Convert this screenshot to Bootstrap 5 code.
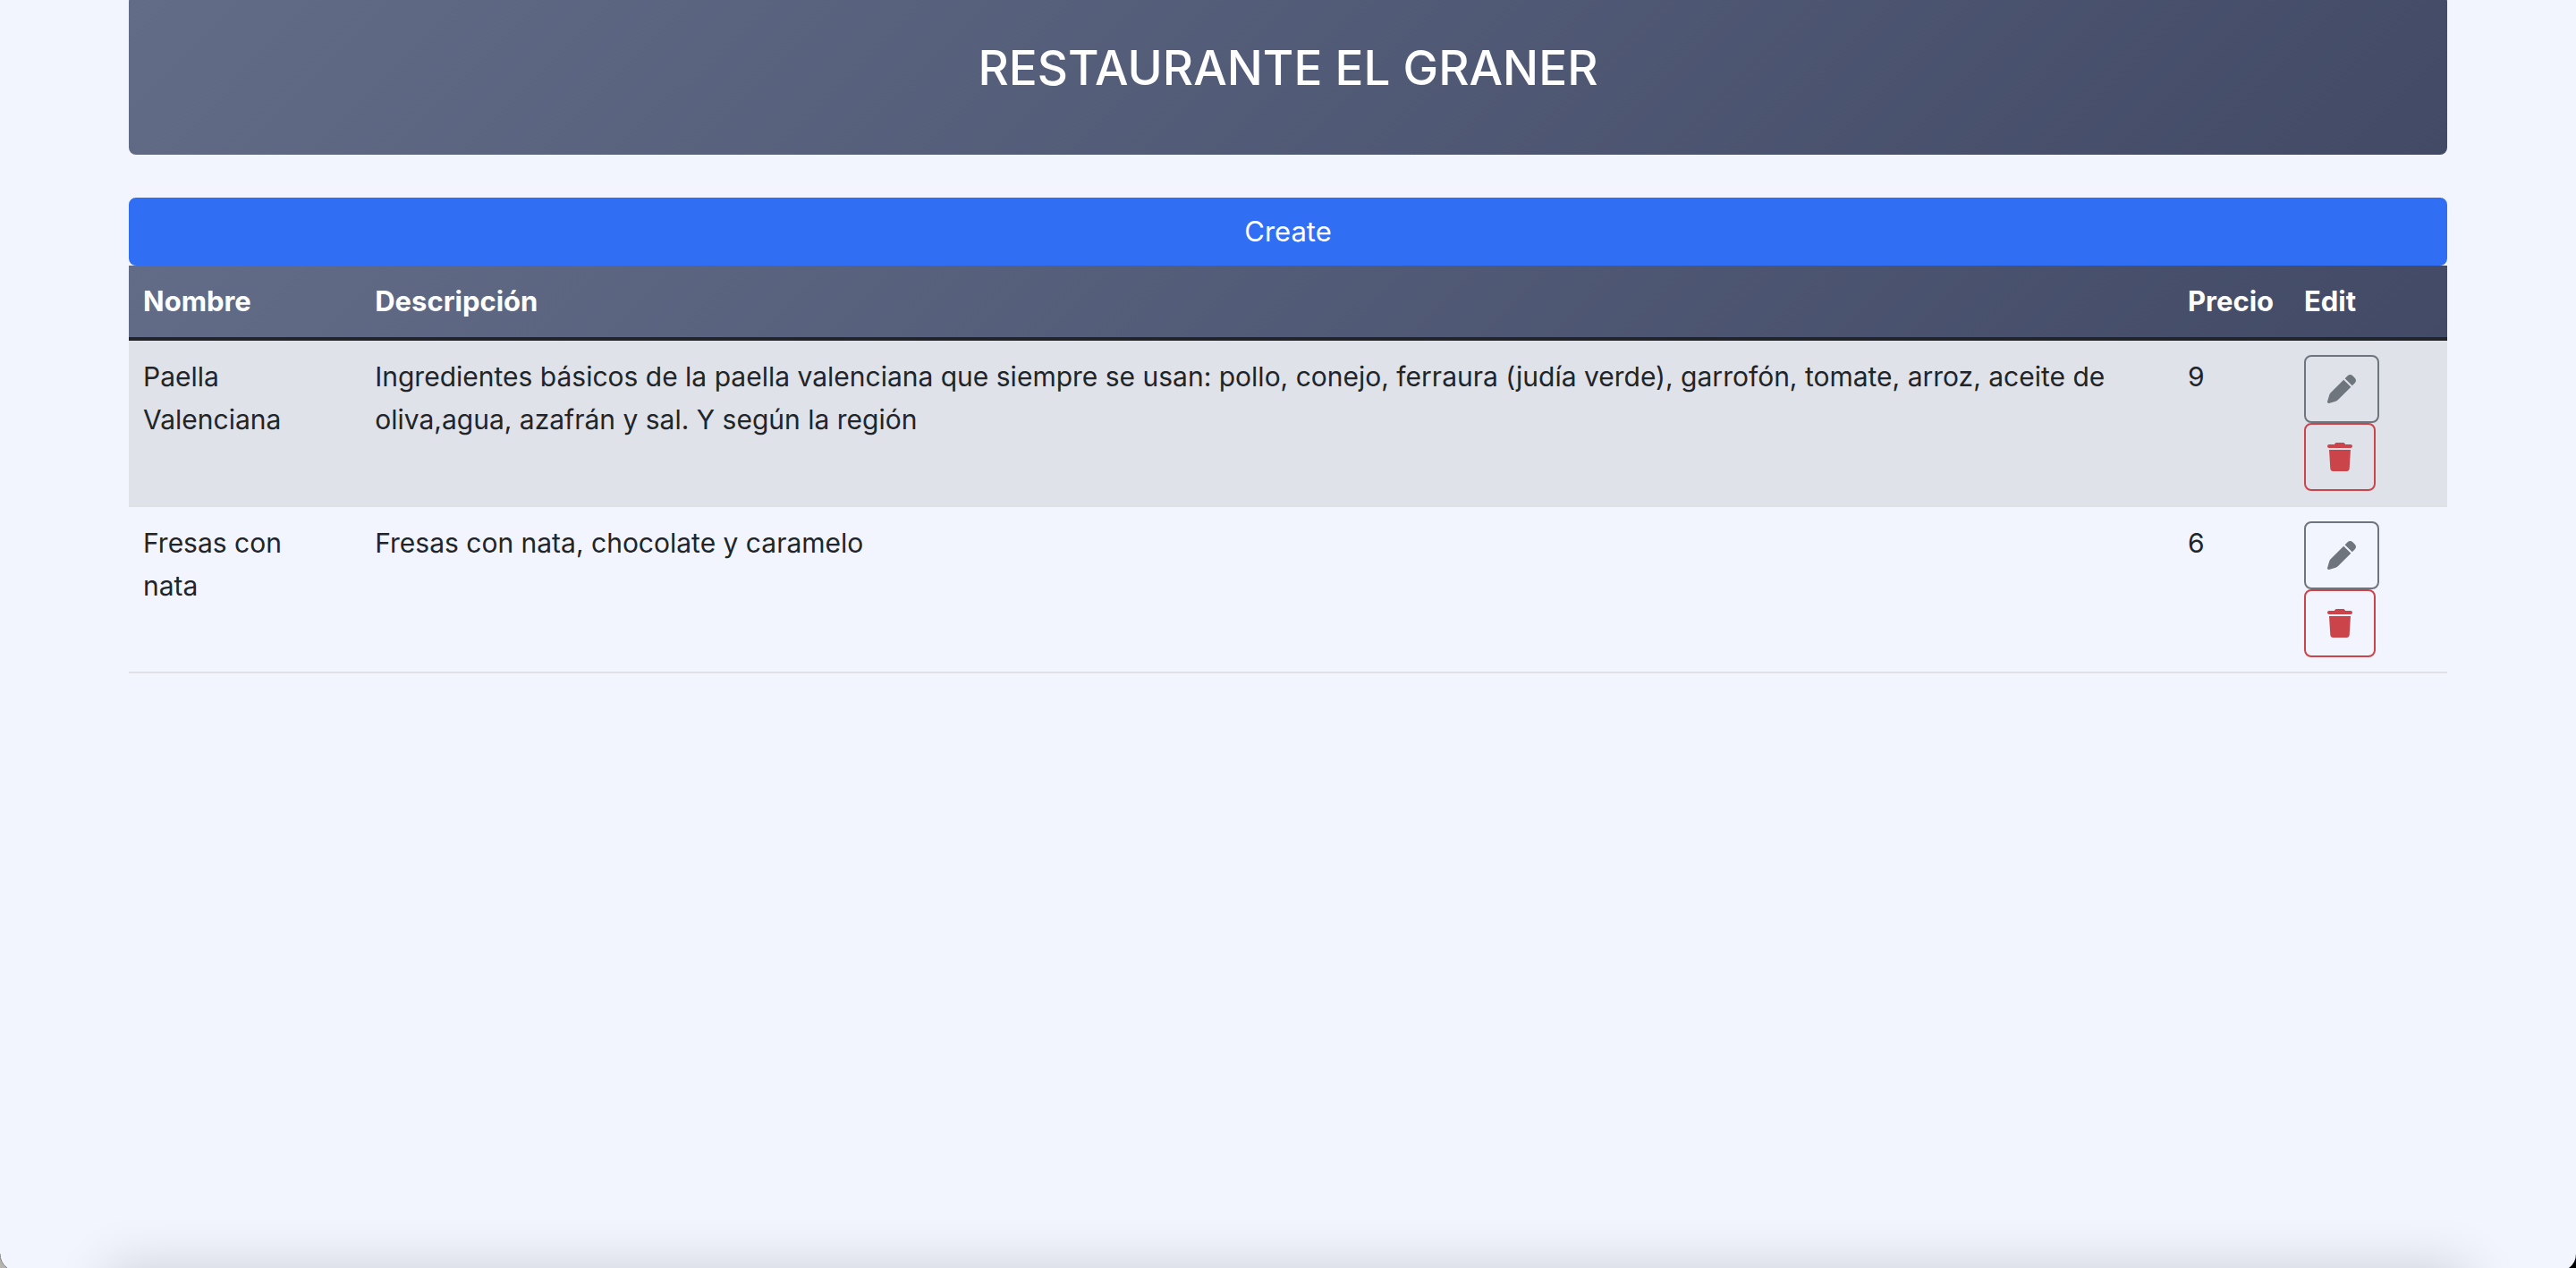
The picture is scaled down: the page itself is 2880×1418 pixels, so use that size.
<!DOCTYPE html>
<html lang="es">
<head>
<meta charset="utf-8">
<meta name="viewport" content="width=device-width, initial-scale=1">
<title>Restaurante El Graner</title>
<link href="https://cdn.jsdelivr.net/npm/bootstrap@5.3.0/dist/css/bootstrap.min.css" rel="stylesheet">
<style>
  body {
    background: #f2f5fe;
    color: #212529;
    font-family: Inter, "Liberation Sans", sans-serif;
    font-size: 30px;
    line-height: 48px;
    min-height: 100vh;
    overflow: hidden;
  }
  .page-wrap { width: 90%; }
  .slate { background: linear-gradient(135deg, #626c87, #424a66); }
  .hero { margin-top: -6px; padding: 48px; border-radius: 8px; margin-bottom: 48px; }
  .hero h1 { font-size: 53px; line-height: 68px; font-weight: 500; margin-bottom: 15px; }
  .btn {
    --bs-btn-padding-x: 24px;
    --bs-btn-padding-y: 12px;
    --bs-btn-border-width: 2px;
    --bs-btn-border-radius: 8px;
    --bs-btn-font-size: 31px;
    --bs-btn-line-height: 48px;
    line-height: 48px;
  }
  .btn-primary { --bs-btn-bg: #306ff4; --bs-btn-border-color: #306ff4; }
  .btn-outline-danger { --bs-btn-color: #cb444a; --bs-btn-border-color: #cb444a; }
  .btn-outline-secondary { --bs-btn-color: #6e757c; --bs-btn-border-color: #6e757c; }
  .btn svg { display: block; height: 32px; margin: 8px 0; fill: currentColor; }
  .dishes { --bs-table-bg: transparent; table-layout: fixed; border-collapse: separate; border-spacing: 0; }
  .dishes > :not(caption) > * > * { padding: 16px; border-bottom: 2px solid #dfe1e6; }
  .dishes > tbody > tr > td:first-child { padding-right: 32px; }
  .dishes > thead > tr > th { border-bottom: 4px solid #212529; font-size: 31px; font-weight: 700; color: #fff; }
  .dishes > tbody > tr:nth-child(odd) > td { background: #e0e2ea; }
  .col-name { width: 10%; }
  .col-price { width: 130px; }
  .col-edit { width: 176px; }
  .dock-shadow { left: 120px; right: 120px; bottom: -60px; height: 60px; box-shadow: 0 0 60px rgba(0, 0, 0, .16); }
  .corner { bottom: 0; width: 8px; height: 16px; }
</style>
<script src="https://cdn.jsdelivr.net/npm/bootstrap@5.3.0/dist/js/bootstrap.bundle.min.js"></script>
</head>
<body>
<svg class="d-none" aria-hidden="true">
  <symbol id="pen" viewBox="0 0 512 512"><path d="M362.7 19.3L314.3 67.7 444.3 197.7l48.4-48.4c25-25 25-65.5 0-90.5L453.3 19.3c-25-25-65.5-25-90.5 0zm-71 71L58.6 323.5c-10.4 10.4-18 23.3-22.2 37.4L1 481.2C-1.5 489.7 .8 498.8 7 505s15.3 8.5 23.7 6.1l120.3-35.4c14.1-4.2 27-11.8 37.4-22.2L421.7 220.3 291.7 90.3z"/></symbol>
  <symbol id="trash" viewBox="0 0 448 512"><path d="M135.2 17.7L128 32H32C14.3 32 0 46.3 0 64S14.3 96 32 96H416c17.7 0 32-14.3 32-32s-14.3-32-32-32H320l-7.2-14.3C307.4 6.8 296.3 0 284.2 0H163.8c-12.1 0-23.2 6.8-28.6 17.7zM416 128H32L53.2 467c1.6 25.3 22.6 45 47.9 45H346.9c25.3 0 46.3-19.7 47.9-45L416 128z"/></symbol>
</svg>
<main class="page-wrap mx-auto">
  <header class="hero slate text-white text-center">
    <h1>RESTAURANTE EL GRANER</h1>
  </header>
  <button type="button" class="btn btn-primary d-block w-100">Create</button>
  <table class="table dishes mb-0">
    <colgroup><col class="col-name"><col><col class="col-price"><col class="col-edit"></colgroup>
    <thead class="slate">
      <tr><th scope="col">Nombre</th><th scope="col">Descripción</th><th scope="col">Precio</th><th scope="col">Edit</th></tr>
    </thead>
    <tbody>
      <tr>
        <td>Paella Valenciana</td>
        <td>Ingredientes básicos de la paella valenciana que siempre se usan: pollo, conejo, ferraura (judía verde), garrofón, tomate, arroz, aceite de oliva,agua, azafrán y sal. Y según la región</td>
        <td>9</td>
        <td>
          <div class="d-flex flex-column align-items-start">
            <button type="button" class="btn btn-outline-secondary" aria-label="Editar"><svg width="32"><use href="#pen"/></svg></button>
            <button type="button" class="btn btn-outline-danger" aria-label="Eliminar"><svg width="28"><use href="#trash"/></svg></button>
          </div>
        </td>
      </tr>
      <tr>
        <td>Fresas con nata</td>
        <td>Fresas con nata, chocolate y caramelo</td>
        <td>6</td>
        <td>
          <div class="d-flex flex-column align-items-start">
            <button type="button" class="btn btn-outline-secondary" aria-label="Editar"><svg width="32"><use href="#pen"/></svg></button>
            <button type="button" class="btn btn-outline-danger" aria-label="Eliminar"><svg width="28"><use href="#trash"/></svg></button>
          </div>
        </td>
      </tr>
    </tbody>
  </table>
</main>
<div class="dock-shadow position-fixed pe-none"></div>
<svg class="corner position-fixed start-0" viewBox="0 0 8 16" aria-hidden="true"><path d="M0 0A20 20 0 0 0 8 16H0Z" fill="#b5b4af"/><path d="M0 0A20 20 0 0 0 8 16" fill="none" stroke="#85858a"/></svg>
<svg class="corner position-fixed end-0" viewBox="0 0 8 16" aria-hidden="true"><path d="M8 0A20 20 0 0 1 0 16H8Z" fill="#000"/></svg>
</body>
</html>
